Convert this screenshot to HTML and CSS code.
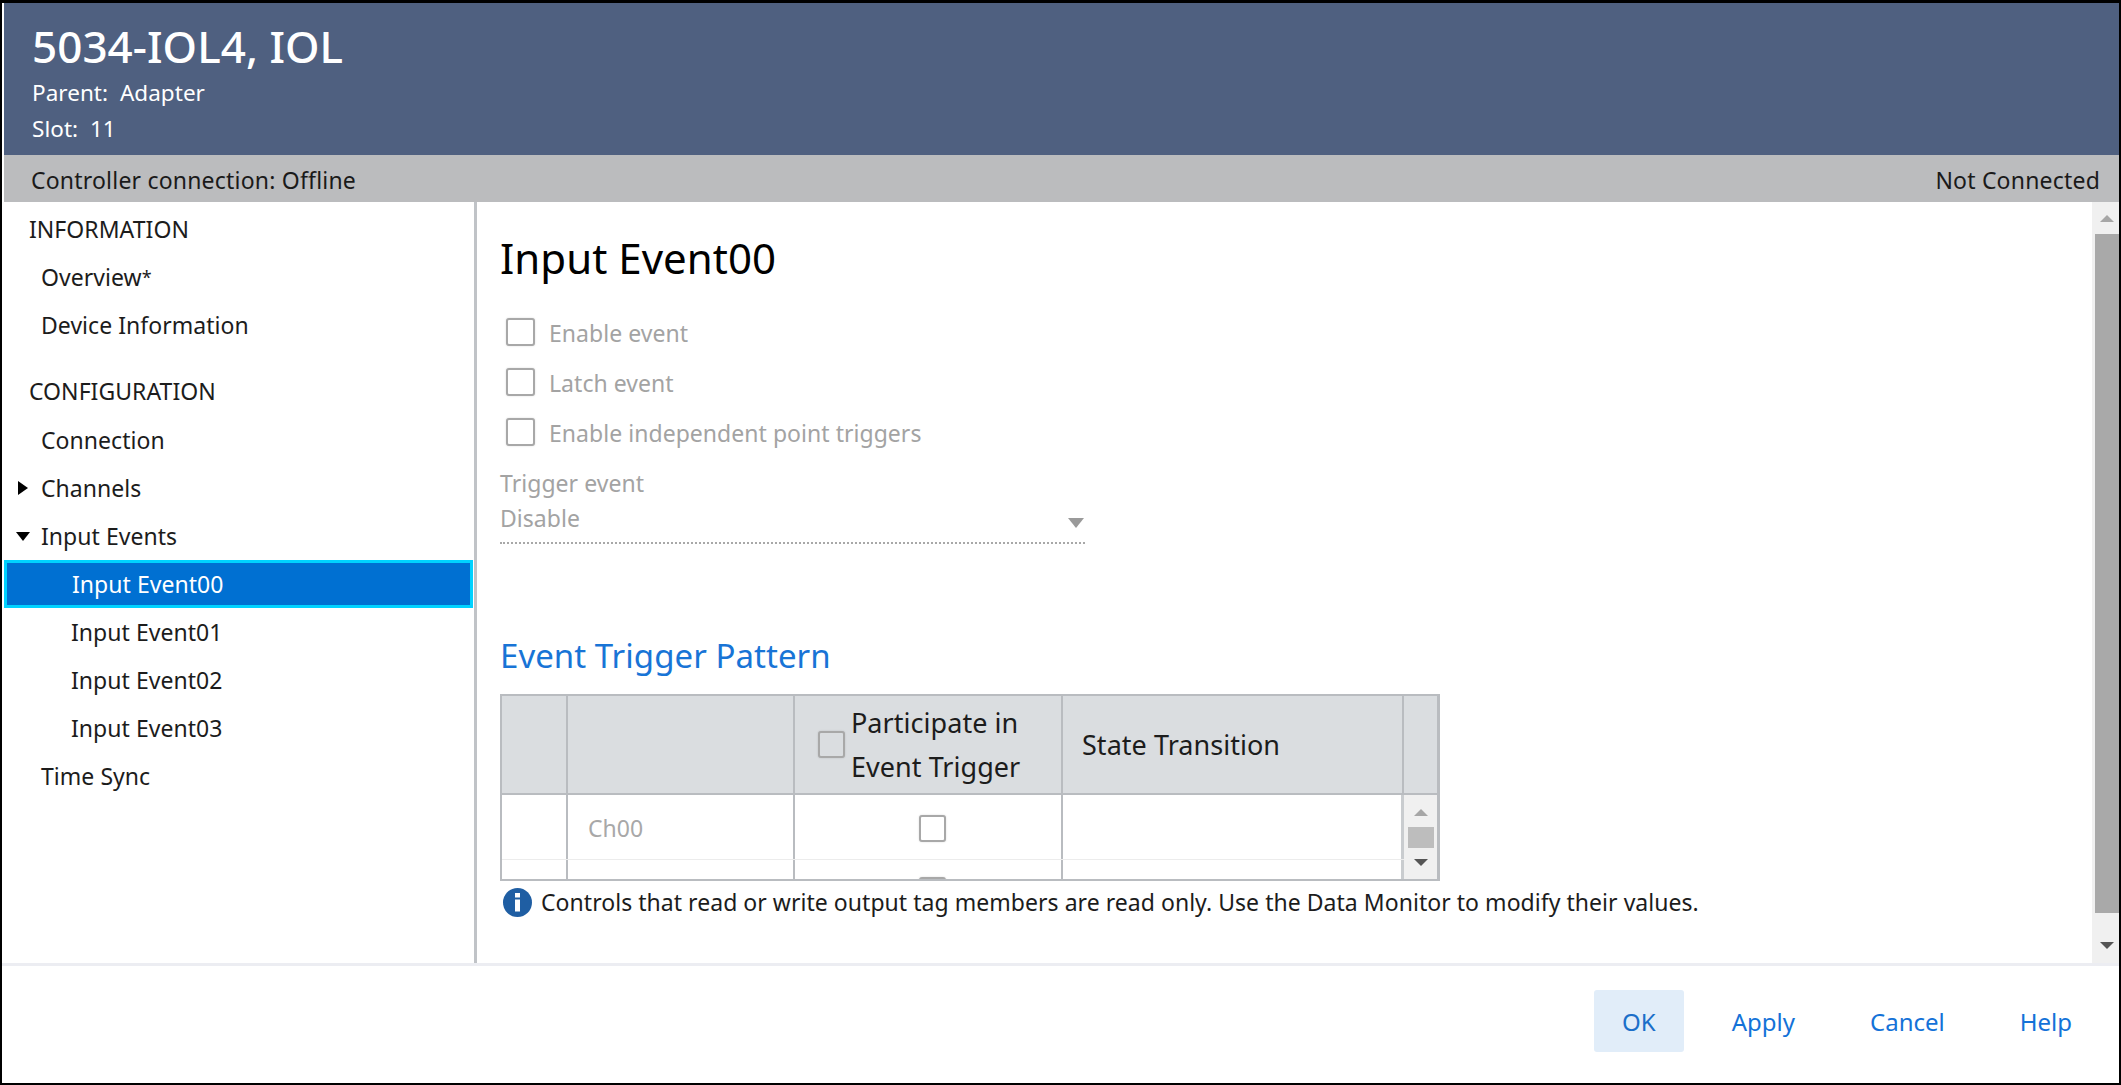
FILE: index.html
```html
<!DOCTYPE html>
<html lang="en">
<head>
<meta charset="utf-8">
<title>5034-IOL4, IOL</title>
<link rel="stylesheet" href="styles.css">
</head>
<body>
<div class="window">
  <header class="header">
    <h1 class="device-title">5034-IOL4, IOL</h1>
    <div class="meta">Parent:&nbsp; Adapter</div>
    <div class="meta">Slot:&nbsp; 11</div>
  </header>
  <div class="status">
    <span>Controller connection: Offline</span>
    <span>Not Connected</span>
  </div>
  <main class="main">
    <nav class="sidebar">
      <div class="nav-head">INFORMATION</div>
      <div class="nav-item">Overview<span class="asterisk">*</span></div>
      <div class="nav-item">Device Information</div>
      <div class="nav-head nav-head-gap">CONFIGURATION</div>
      <div class="nav-item">Connection</div>
      <div class="nav-item"><span class="tri tri-right"></span>Channels</div>
      <div class="nav-item"><span class="tri tri-down"></span>Input Events</div>
      <div class="nav-sub selected">Input Event00</div>
      <div class="nav-sub">Input Event01</div>
      <div class="nav-sub">Input Event02</div>
      <div class="nav-sub">Input Event03</div>
      <div class="nav-item">Time Sync</div>
    </nav>
    <section class="content">
      <h2 class="page-title">Input Event00</h2>
      <label class="check-row"><span class="box box-wide"></span>Enable event</label>
      <label class="check-row"><span class="box box-wide"></span>Latch event</label>
      <label class="check-row"><span class="box box-wide"></span>Enable independent point triggers</label>
      <div class="select">
        <div class="select-label">Trigger event</div>
        <div class="select-value">Disable<span class="tri tri-select"></span></div>
      </div>
      <h3 class="section-title">Event Trigger Pattern</h3>
      <div class="table">
        <div class="thead">
          <div class="th"></div>
          <div class="th"></div>
          <div class="th th-check"><span class="box box-head"></span><span>Participate in<br>Event Trigger</span></div>
          <div class="th th-state">State Transition</div>
          <div class="th th-last"></div>
        </div>
        <div class="tbody">
          <div class="rows">
            <div class="row">
              <div class="td"></div>
              <div class="td td-name">Ch00</div>
              <div class="td td-center"><span class="box"></span></div>
              <div class="td td-last"></div>
            </div>
            <div class="row row-clipped">
              <div class="td"></div>
              <div class="td td-name"></div>
              <div class="td td-center"><span class="box"></span></div>
              <div class="td td-last"></div>
            </div>
          </div>
          <div class="scrollbar scrollbar-small">
            <span class="tri tri-up-small"></span>
            <span class="thumb-small"></span>
            <span class="tri tri-down-small"></span>
          </div>
        </div>
      </div>
      <div class="note">
        <svg class="info" viewBox="0 0 29 29" aria-hidden="true"><circle cx="14.5" cy="14.5" r="14.5" fill="#1f5ea3"/><rect x="12" y="5" width="5" height="4.5" fill="#fff"/><rect x="12" y="11.5" width="5" height="12" fill="#fff"/></svg>
        <span>Controls that read or write output tag members are read only. Use the Data Monitor to modify their values.</span>
      </div>
    </section>
    <div class="scrollbar scrollbar-main">
      <span class="tri tri-up-main"></span>
      <span class="thumb-main"></span>
      <span class="tri tri-down-main"></span>
    </div>
  </main>
  <footer class="footer">
    <button class="btn btn-primary">OK</button>
    <button class="btn">Apply</button>
    <button class="btn">Cancel</button>
    <button class="btn">Help</button>
  </footer>
</div>
</body>
</html>
```
FILE: styles.css
```css
* { box-sizing: border-box; }
html, body { margin: 0; height: 100%; overflow: hidden; background: #fff; }
body { font-family: "Noto Sans", "Open Sans", sans-serif; font-size: 23px; letter-spacing: .04px; color: #1c1c1c; }

.window {
  width: 2121px; height: 1085px;
  display: flex; flex-direction: column;
  border-style: solid; border-color: #000;
  border-width: 3px 2px 2px 2px;
  background: #fff;
}

.header {
  height: 152px; flex: none; margin-left: 2px;
  background: #4f6080; color: #fff;
  padding: 18px 0 0 28px;
}
.device-title { margin: 0 0 4px; font-size: 44px; line-height: 50px; font-weight: 500; }
.meta { font-size: 22.5px; line-height: 36px; }

.status {
  height: 47px; flex: none; margin-left: 2px;
  background: #bbbcbe; color: #1a1a1a;
  display: flex; justify-content: space-between; align-items: center;
  padding: 3px 19px 0 27px;
  letter-spacing: .2px;
}

.main { flex: 1; display: flex; min-height: 0; border-bottom: 3px solid #ecedf2; }

.sidebar {
  width: 475px; flex: none; padding: 3px 0 0 2px;
  border-right: 3px solid #c0c3c7;
}
.nav-head { height: 48px; line-height: 48px; padding-left: 25px; }
.nav-head-gap { margin: 18px 0 1px; }
.nav-item { height: 48px; line-height: 48px; padding-left: 37px; position: relative; }
.nav-sub { height: 48px; line-height: 48px; padding-left: 67px; }
.asterisk { font-size: 18px; vertical-align: 2px; }
.selected {
  background: #0070d2; color: #fff;
  border: 3px solid #00d2ff;
  line-height: 42px; padding-left: 65px;
  width: 469px;
}

.tri { display: block; width: 0; height: 0; border-style: solid; border-color: transparent; }
.tri-right { position: absolute; left: 14px; top: 17px; border-width: 7px 0 7px 10px; border-left-color: #000; }
.tri-down { position: absolute; left: 12px; top: 20px; border-width: 9px 7px 0 7px; border-top-color: #000; }

.content { flex: 1; min-width: 0; padding: 27px 0 0 23px; }
.page-title { margin: 0 0 21px; font-size: 42px; line-height: 58px; font-weight: 400; color: #000; }

.check-row { display: flex; align-items: center; gap: 14px; height: 50px; color: #a3a3a3; padding-left: 6px; }
.box {
  display: block; flex: none;
  width: 27px; height: 27px;
  background: #fff; border: 2px solid #a8a8a8; border-radius: 3px;
  box-shadow: 0 0 2px rgba(0,0,0,.15);
}
.box-wide { width: 29px; height: 28px; margin-top: -2px; }

.select { width: 585px; margin-top: 8px; color: #a3a3a3; }
.select-label { line-height: 34px; }
.select-value {
  position: relative; line-height: 36px; height: 44px;
  border-bottom: 2px dotted #a8a8a8;
}
.tri-select { position: absolute; right: 1px; top: 18px; border-width: 10px 8px 0 8px; border-top-color: #9a9a9a; }

.section-title { margin: 90px 0 0; font-size: 33px; line-height: 44px; font-weight: 400; color: #1874d6; }

.table { width: 940px; margin-top: 16px; border: 2px solid #b9bcc0; border-right-width: 3px; }
.thead { display: grid; grid-template-columns: 66px 227px 268px 341px 33px; height: 99px; background: #dadde0; border-bottom: 2px solid #b9bcc0; }
.th { border-right: 2px solid #b9bcc0; display: flex; align-items: center; color: #1c1c1c; }
.th-last { border-right: 0; }
.th-check { padding-left: 23px; gap: 6px; line-height: 44px; font-size: 27px; white-space: nowrap; }
.th-state { padding-left: 19px; font-size: 27px; }
.box-head { background: #dadde0; }

.tbody { display: flex; height: 84px; overflow: hidden; }
.rows { flex: 1; min-width: 0; }
.row { display: grid; grid-template-columns: 66px 227px 268px 341px; height: 65px; border-bottom: 1px solid #ececec; }
.row-clipped { height: 60px; }
.td { border-right: 2px solid #b9bcc0; display: flex; align-items: center; }
.td-name { padding: 2px 0 0 20px; color: #a8a8a8; font-size: 23px; }
.td-center { justify-content: center; padding: 2px 0 0 8px; }
.td-last { border-right: 3px solid #c9cccf; }

.scrollbar { display: flex; flex-direction: column; align-items: center; background: #f0f0f0; flex: none; }
.scrollbar-small { width: 33px; padding-top: 14px; }
.tri-up-small { border-width: 0 7px 7px 7px; border-bottom-color: #a6a6a6; }
.thumb-small { width: 26px; height: 21px; background: #bdbdbd; margin-top: 11px; }
.tri-down-small { border-width: 7px 7px 0 7px; border-top-color: #555; margin-top: 11px; }

.scrollbar-main { width: 27px; align-items: flex-end; }
.tri-up-main { border-width: 0 7px 7px 7px; border-bottom-color: #a6a6a6; margin: 13px 5px 0 0; }
.thumb-main { width: 24px; height: 679px; background: #a9a9a9; margin-top: 12px; }
.tri-down-main { border-width: 7px 7px 0 7px; border-top-color: #555; margin: 29px 5px 0 0; }

.note { display: flex; align-items: center; gap: 9px; margin: 5px 0 0 3px; color: #1c1c1c; }
.info { width: 29px; height: 29px; flex: none; }

.footer { height: 117px; flex: none; display: flex; align-items: flex-start; justify-content: flex-end; gap: 17px; padding: 24px 18px 0 0; }
.btn {
  font: inherit; font-size: 24px; color: #1472d8; background: none; border: 0;
  height: 62px; padding: 0 29px; border-radius: 3px;
}
.btn-primary { background: #e1edf9; color: #1b6fc9; padding: 0 28px; margin-right: 2px; }
```
